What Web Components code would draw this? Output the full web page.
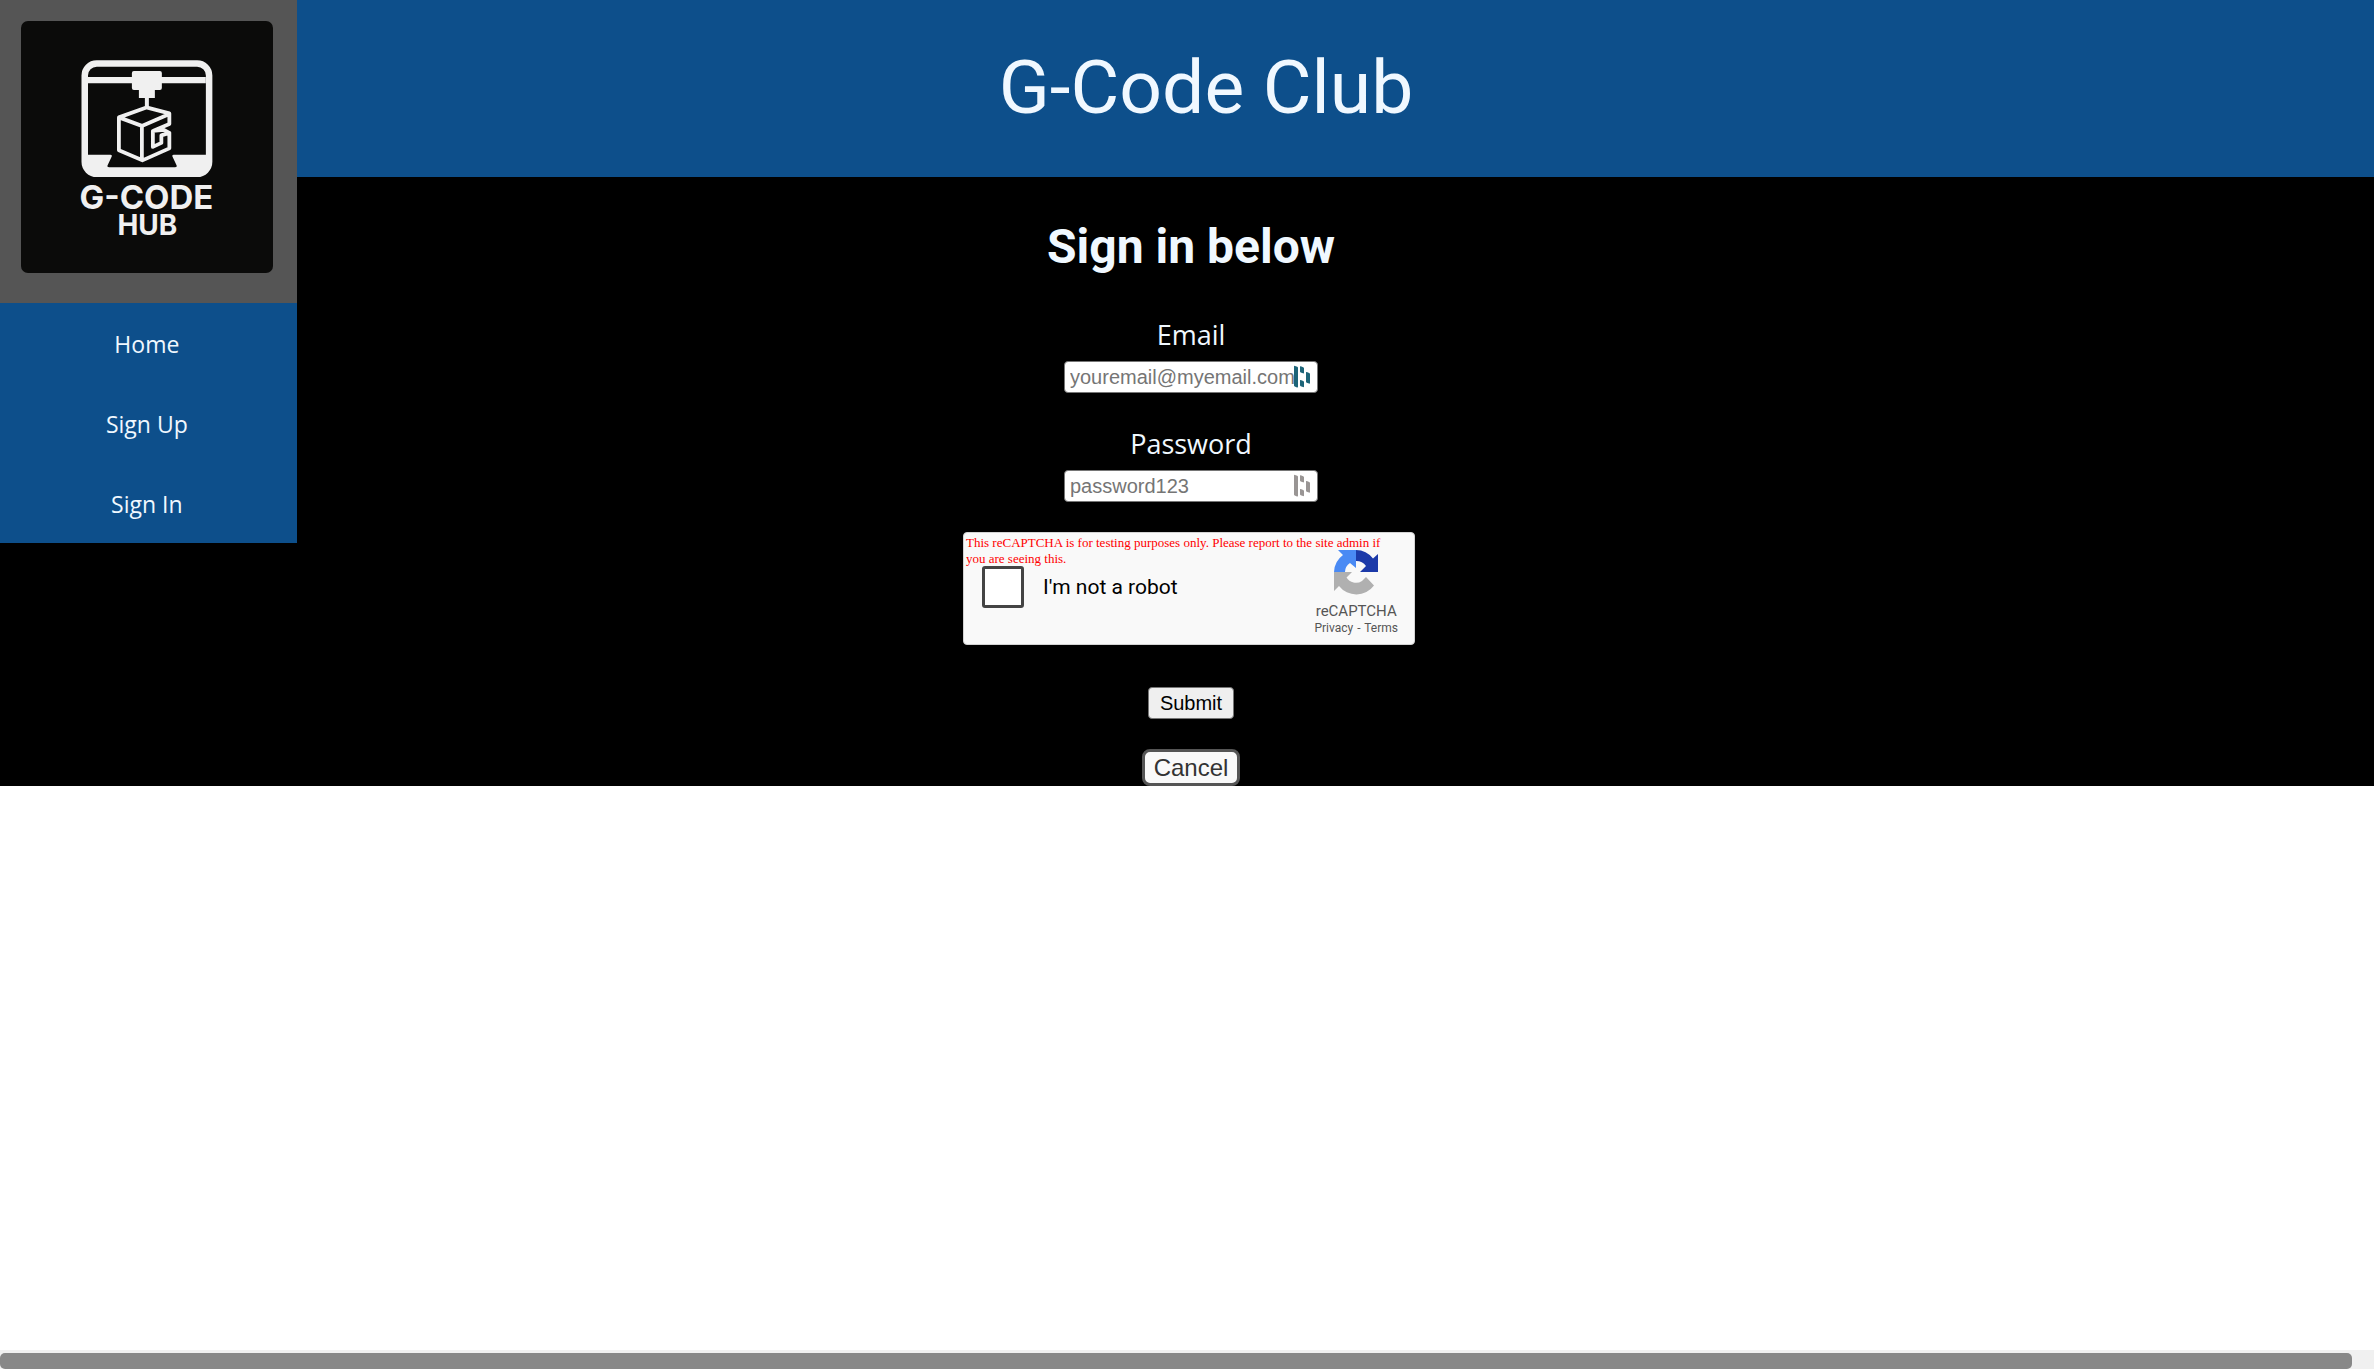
<!DOCTYPE html>
<html lang="en">
<head>
<meta charset="utf-8">
<title>G-Code Club</title>
<style>
  body { margin: 0; background: #fff; }
</style>
</head>
<body>
<club-page>
  <club-sidebar slot="side">
    <club-logo slot="logo"></club-logo>
    <nav-link href="#home">Home</nav-link>
    <nav-link href="#signup">Sign Up</nav-link>
    <nav-link href="#signin">Sign In</nav-link>
  </club-sidebar>
  <club-header slot="top">G-Code Club</club-header>
  <sign-in-form heading="Sign in below"></sign-in-form>
  <scroll-track slot="bottom"></scroll-track>
</club-page>
<script>
const define = (name, html, setup) => {
  const template = document.createElement('template');
  template.innerHTML = html;
  customElements.define(name, class extends HTMLElement {
    constructor() {
      super();
      this.attachShadow({ mode: 'open' }).append(template.content.cloneNode(true));
    }
    connectedCallback() { if (setup) setup(this, this.shadowRoot); }
  });
};

define('club-page', `
  <style>
    :host { display: flex; flex-direction: column; min-height: 100vh; color: aliceblue; }
    .stage { display: grid; grid-template-columns: 12.5% 1fr; background: #000; }
    .main { grid-area: 1 / 1 / 2 / 3; display: flex; flex-direction: column; }
    .side { grid-area: 1 / 1 / 2 / 2; z-index: 1; align-self: start; }
    .bottom { margin-top: auto; }
  </style>
  <div class="stage">
    <div class="main"><slot name="top"></slot><slot></slot></div>
    <div class="side"><slot name="side"></slot></div>
  </div>
  <div class="bottom"><slot name="bottom"></slot></div>`);

define('club-sidebar', `
  <style>
    :host { display: block; background: #0d4f8b; }
    .brand { background: #555; padding: 21px 24px 30px 21px; }
    nav { display: flex; flex-direction: column; padding-right: 3px; }
  </style>
  <div class="brand"><slot name="logo"></slot></div>
  <nav><slot></slot></nav>`);

define('nav-link', `
  <style>
    :host { display: block; }
    a { display: block; padding: 25px 16px 23px; font: 23px/32px "Open Sans", "Noto Sans", sans-serif; color: aliceblue; text-align: center; text-decoration: none; }
  </style>
  <a><slot></slot></a>`, (host, root) => {
  root.querySelector('a').href = host.getAttribute('href');
});

define('club-logo', `
  <style>
    :host { display: block; }
    svg { display: block; width: 100%; aspect-ratio: 1; border-radius: 7px; background: #0b0b0a; }
    text { font-family: Inter, sans-serif; font-weight: 700; fill: #f0f0f0; text-anchor: middle; }
  </style>
  <svg viewBox="21 21 252 252" role="img" aria-label="G-Code Hub">
    <rect x="84.800" y="63.500" width="124.500" height="110.500" rx="12" fill="none" stroke="#f0f0f0" stroke-width="6.500"/>
    <path d="M88 77h118v6.300H88zM88 155h22.500q2 0 1.200 2l-4 8.500q-.8 2 1.500 2h66q2.300 0 1.500-2l-4-8.500q-.8-2 1.200-2H207v13q-1 7-8 7H96q-7 0-8-7z" fill="#f0f0f0"/>
    <path d="M134 71h26q2 0 2 2v15q0 2-2 2h-5v8h-6v9h-4v-9h-6v-8h-5q-2 0-2-2V73q0-2 2-2z" fill="#f0f0f0"/>
    <path d="M119 117.500L146.500 107.500L169.500 113.500V124L153 131V147L161.500 143V135.500L169.500 133V148.500L142.500 160.500L119 150.500ZM119 117.500L142 126L169.500 114M142 126V160M153 131L164 130L169.500 133" fill="none" stroke="#f0f0f0" stroke-width="3.800" stroke-linejoin="round"/>
    <text x="146.500" y="209.500" font-size="33">G-CODE</text>
    <text x="147.500" y="235.500" font-size="28">HUB</text>
  </svg>`);

define('club-header', `
  <style>
    :host { display: block; background: #0d4f8b; padding: 43px 0 46px 38px; }
    h1 { margin: 0; font: 400 75px/88px Roboto, sans-serif; text-align: center; }
  </style>
  <h1><slot></slot></h1>`);

define('text-field', `
  <style>
    :host { display: flex; flex-direction: column; align-items: center; gap: 8px; }
    label { font: 27px/36px "Open Sans", "Noto Sans", sans-serif; }
    .box { display: grid; align-items: center; justify-items: end; }
    .box > * { grid-area: 1 / 1; }
    input { box-sizing: border-box; width: 254px; height: 32px; margin: 0; padding: 0 5px; border: 1px solid #767676; border-radius: 4px; background: #fff; color: #000; font: 20px "Liberation Sans", Arial, sans-serif; }
    input::placeholder { color: #757575; }
    svg { width: 18px; height: 24px; margin-right: 7px; fill: var(--mark, #1d6478); }
  </style>
  <label for="f"></label>
  <div class="box">
    <input id="f">
    <svg viewBox="0 0 18 24" aria-hidden="true"><path d="M1 1.500q0-1 1-.6l2.300.9q.7.300.7 1v19q0 1-1 .6l-2.300-.9q-.7-.3-.7-1zM7 1.800q0-.8.800-.5l2.400.9q.8.300.8 1v4.500q0 1-1 .6l-2.300-.9q-.7-.3-.7-1zM7 15.600q0-.8.800-.5l2.400.9q.8.300.8 1v4.500q0 1-1 .6l-2.300-.9q-.7-.3-.7-1zM13 7.600q0-.8.800-.5l2.400.9q.8.300.8 1v9q0 1-1 .6l-2.300-.9q-.7-.3-.7-1z"/></svg>
  </div>`, (host, root) => {
  root.querySelector('label').textContent = host.getAttribute('label');
  const input = root.querySelector('input');
  input.type = host.getAttribute('type');
  input.placeholder = host.getAttribute('placeholder');
});

define('captcha-box', `
  <style>
    :host { display: block; position: relative; box-sizing: border-box; width: 452px; padding: 17px 16px 9px 18px; border: 1px solid #d3d3d3; border-radius: 4px; background: #f9f9f9; }
    .warning { position: absolute; inset: 2px 12px auto 2px; margin: 0; font: 13px/16px "Liberation Serif", "Times New Roman", serif; color: #f00; }
    .row { display: flex; justify-content: space-between; align-items: flex-start; }
    .check { display: flex; align-items: center; gap: 19px; padding-top: 16px; }
    input { appearance: none; box-sizing: border-box; width: 42px; height: 42px; margin: 0; border: 3px solid #444; border-radius: 3px; background: #fff; }
    label { font: 21px/26px Roboto, sans-serif; color: #000; }
    .brand { display: flex; flex-direction: column; align-items: center; color: #555; font-family: Roboto, sans-serif; }
    svg { width: 44px; height: 45px; display: block; }
    .name { margin-top: 6px; font-size: 15px; line-height: 20px; }
    .links { font-size: 12px; line-height: 14px; }
    .links span { margin: 0 1px; }
    a { color: inherit; text-decoration: none; }
  </style>
  <p class="warning">This reCAPTCHA is for testing purposes only. Please report to the site admin if you are seeing this.</p>
  <div class="row">
    <div class="check"><input type="checkbox" id="c"><label for="c">I'm not a robot</label></div>
    <div class="brand">
      <svg viewBox="0 0 44 45" aria-hidden="true">
        <path d="M22 0A22 22 0 0 1 39 8.500L44 4V22H26L32 16A12 12 0 0 0 22 11z" fill="#1c3aa9"/>
        <path d="M22 0H4L9 5A22 22 0 0 0 0 22H11A11 11 0 0 1 16 13L22 18z" fill="#4a8af4"/>
        <path d="M0 22H18L12.500 27.500A11 11 0 0 0 28 31L32 27L40 35.500A22 22 0 0 1 5 36L0 41z" fill="#b0b0b0"/>
      </svg>
      <div class="name">reCAPTCHA</div>
      <div class="links"><a href="#privacy">Privacy</a> <span>-</span> <a href="#terms">Terms</a></div>
    </div>
  </div>`);

define('sign-in-form', `
  <style>
    :host { display: block; padding-left: 8px; }
    form { display: flex; flex-direction: column; align-items: center; }
    h2 { margin: 41px 0; font: 700 48px/58px Roboto, sans-serif; }
    .fields { display: flex; flex-direction: column; gap: 33px; }
    captcha-box { margin: 30px 4px 42px 0; }
    button { box-sizing: border-box; margin: 0; font-family: "Liberation Sans", Arial, sans-serif; }
    .submit { height: 32px; padding: 0 11px; border: 1px solid #767676; border-radius: 4px; background: #efefef; color: #000; font-size: 20px; }
    .cancel { margin-top: 30px; height: 37px; padding: 0 9px; border: 3px solid #555; border-radius: 8px; background: #f9f9f9; color: #333; font-size: 24px; line-height: 28px; }
  </style>
  <form>
    <h2></h2>
    <div class="fields">
      <text-field label="Email" type="email" placeholder="youremail@myemail.com"></text-field>
      <text-field label="Password" type="password" placeholder="password123" style="--mark:#999594"></text-field>
    </div>
    <captcha-box></captcha-box>
    <button class="submit" type="submit">Submit</button>
    <button class="cancel" type="button">Cancel</button>
  </form>`, (host, root) => {
  root.querySelector('h2').textContent = host.getAttribute('heading');
});

define('scroll-track', `
  <style>
    :host { display: block; background: #f0f0f0; padding: 3px 22px 0 0; }
    div { height: 16px; border-radius: 5px; background: #888; }
  </style>
  <div></div>`);
</script>
</body>
</html>
